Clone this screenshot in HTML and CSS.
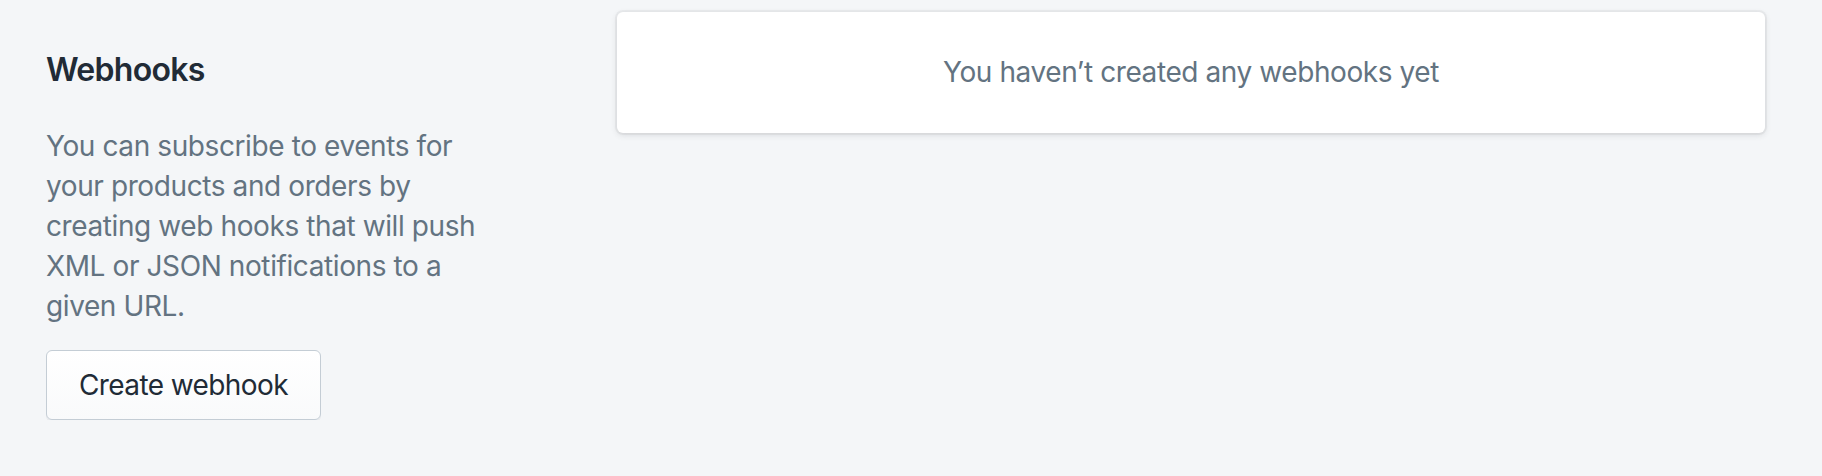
FILE: index.html
```html
<!DOCTYPE html>
<html lang="en">
<head>
<meta charset="utf-8">
<title>Webhooks</title>
<link rel="stylesheet" href="styles.css">
</head>
<body>
<div class="page">
  <section class="annotation">
    <h2 class="heading">Webhooks</h2>
    <p class="desc">You can subscribe to events for your products and orders by creating web hooks that will push XML or JSON notifications to a given URL.</p>
    <button class="btn" type="button">Create webhook</button>
  </section>
  <section class="content">
    <div class="card">You haven’t created any webhooks yet</div>
  </section>
</div>
</body>
</html>
```

FILE: styles.css
```css
html, body {
  margin: 0;
  padding: 0;
  background: #f4f6f8;
  font-family: Inter, "Noto Sans", "Liberation Sans", sans-serif;
}

.page {
  display: flex;
  align-items: flex-start;
  padding: 12px 57px 0 46px;
}

.annotation {
  flex: 0 0 571px;
  box-sizing: border-box;
  padding: 34px 126px 0 0;
}

.heading {
  margin: 0;
  font-size: 32px;
  line-height: 48px;
  font-weight: 600;
  letter-spacing: -0.7px;
  color: #212b36;
}

.desc {
  margin: 32px 0 24px;
  font-size: 28px;
  line-height: 40px;
  letter-spacing: -0.4px;
  color: #637381;
}

.btn {
  box-sizing: border-box;
  height: 70px;
  padding: 0 32px;
  border: 1px solid #c4cdd5;
  border-radius: 6px;
  background: linear-gradient(180deg, #ffffff, #f9fafb);
  box-shadow: 0 2px 0 rgba(22, 29, 37, 0.05);
  font-family: inherit;
  font-size: 28px;
  letter-spacing: -0.6px;
  color: #212b36;
  cursor: pointer;
}

.content {
  flex: 1 1 auto;
}

.card {
  background: #ffffff;
  border-radius: 6px;
  box-shadow: 0 0 0 2px rgba(63, 63, 68, 0.05), 0 2px 6px rgba(63, 63, 68, 0.15);
  padding: 40px;
  text-align: center;
  font-size: 28px;
  line-height: 41px;
  letter-spacing: -0.42px;
  color: #637381;
}
```
